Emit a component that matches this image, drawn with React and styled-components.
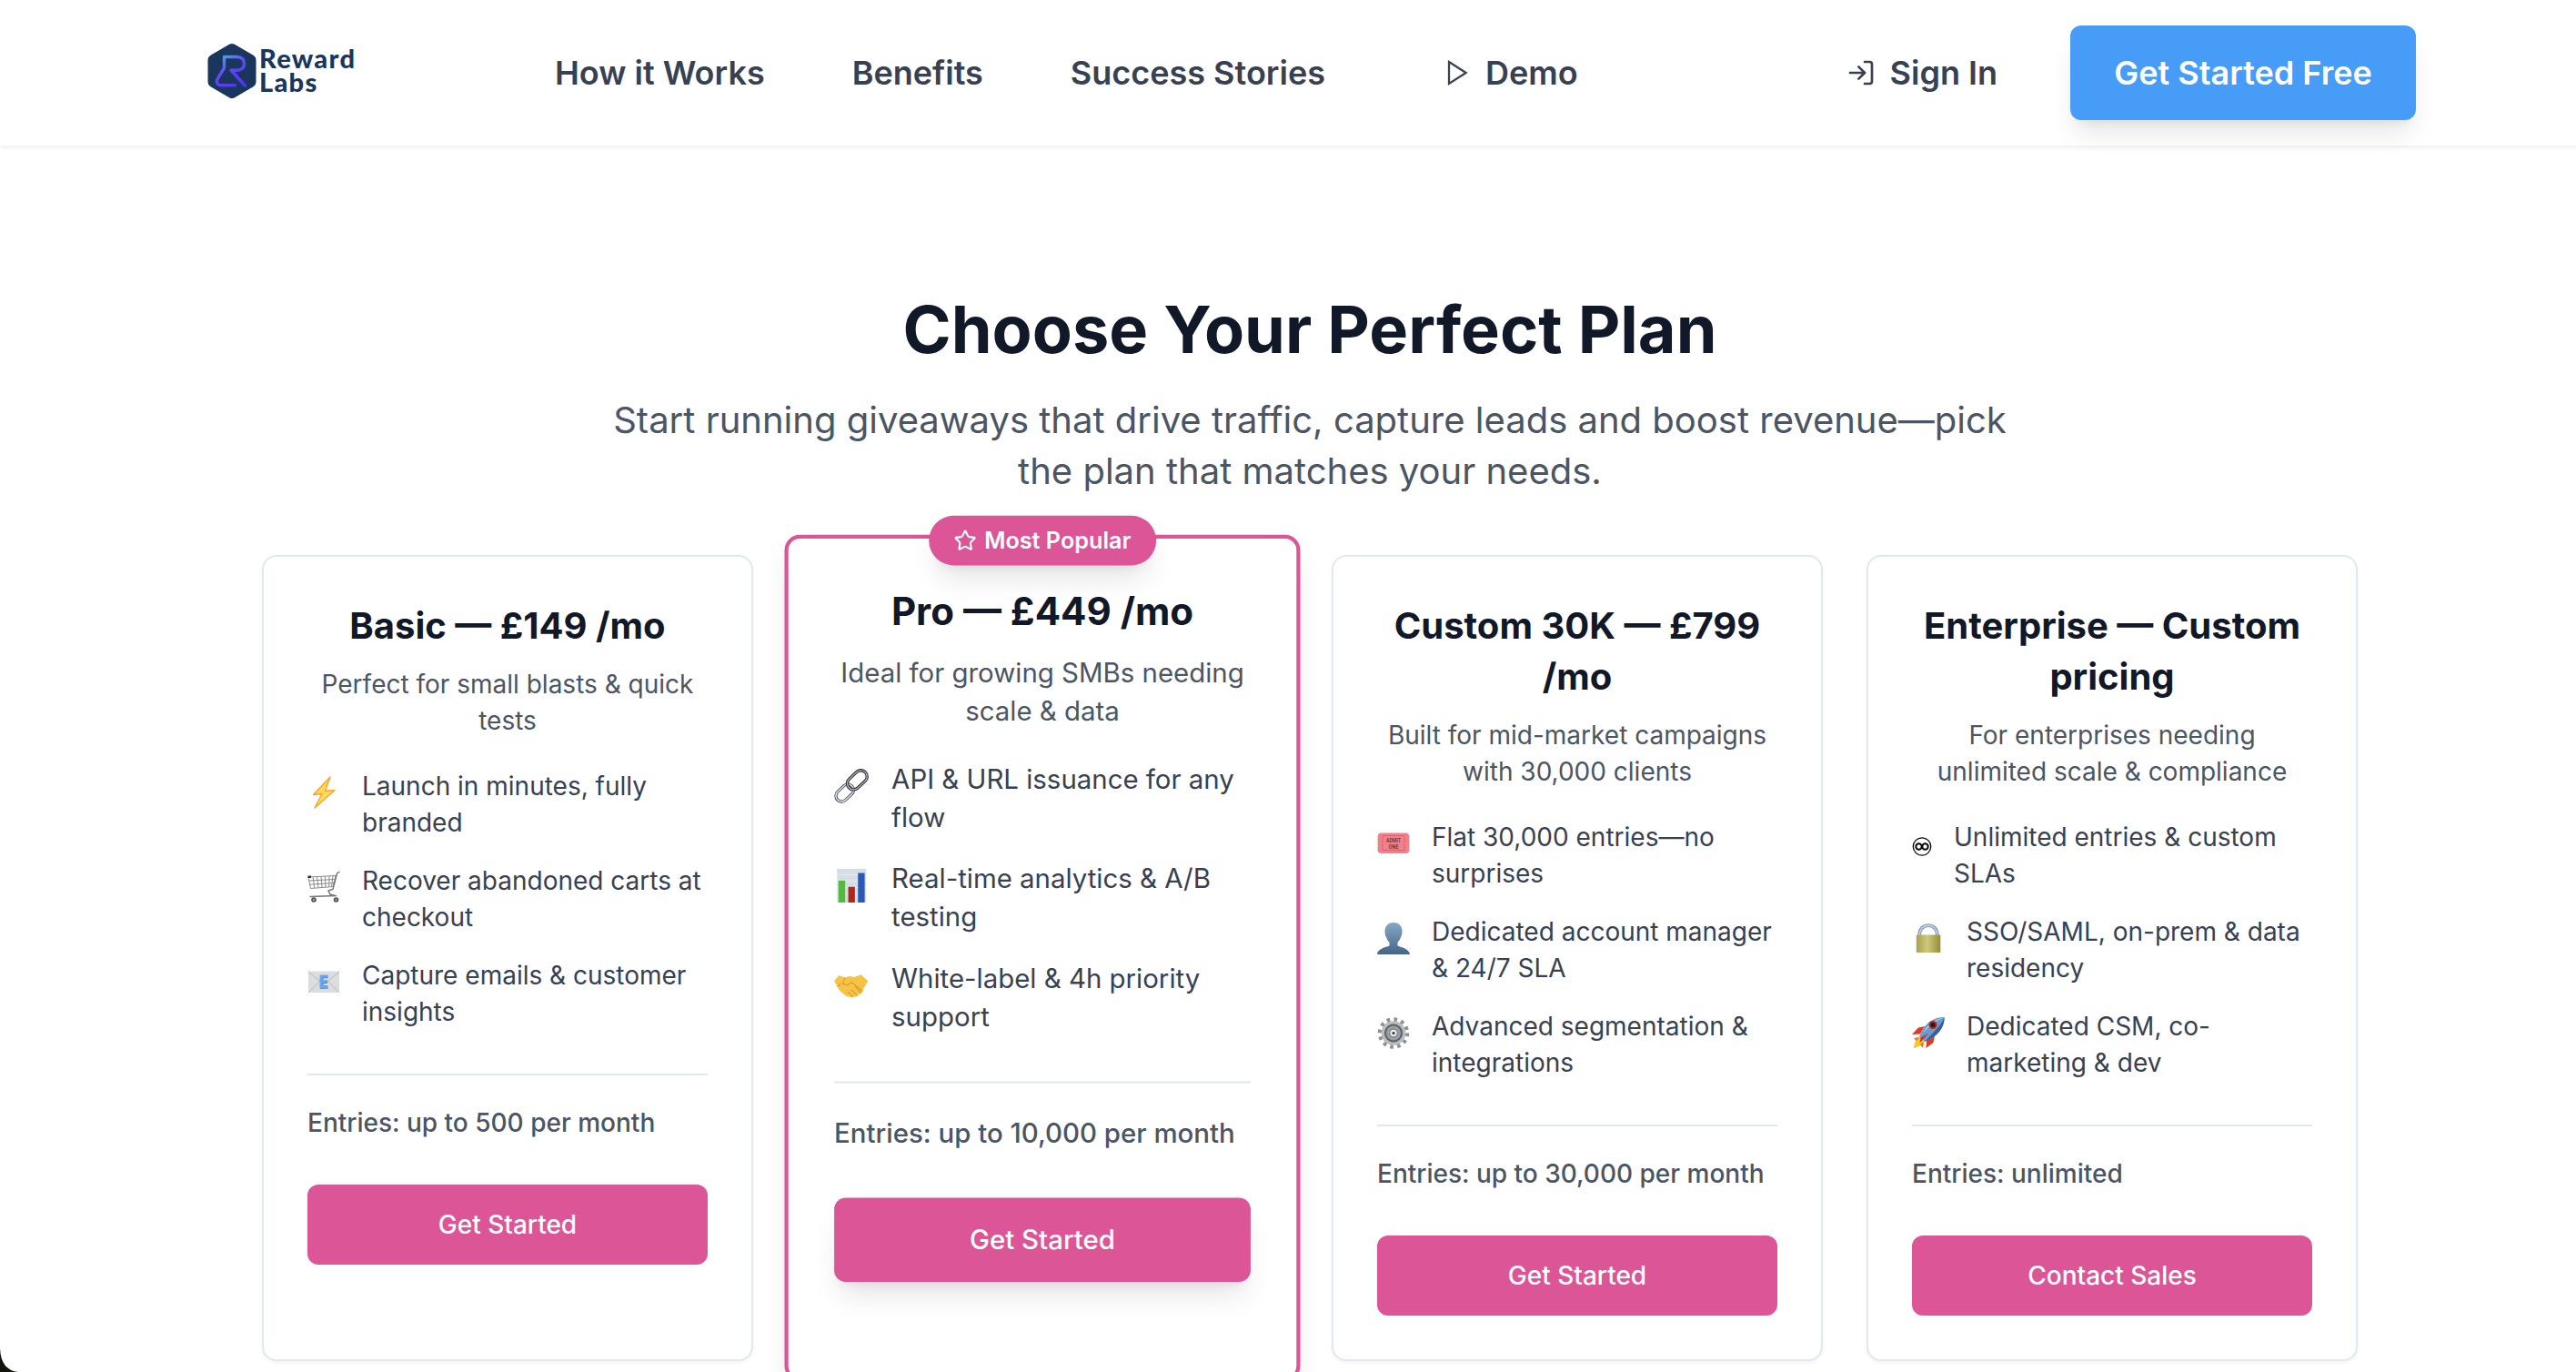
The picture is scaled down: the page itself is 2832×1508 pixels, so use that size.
import React from "react";
import styled, { createGlobalStyle, css } from "styled-components";
import { LogIn, Star } from "lucide-react";

const Global = createGlobalStyle`
  *, *::before, *::after { box-sizing: border-box; }
  html, body { margin: 0; padding: 0; background: #fff; overflow: hidden; }
  body { font-family: Inter, "Liberation Sans", sans-serif; font-optical-sizing: none; -webkit-font-smoothing: antialiased; }
  h1, h2, p, ul { margin: 0; padding: 0; font-weight: inherit; }
  button { font: inherit; border: 0; cursor: pointer; }
  svg { display: block; flex: none; }
`;

const Window = styled.div`
  position: relative;
  width: 2832px;
  height: 1508px;
  overflow: hidden;
  background: #fff;
`;

const Page = styled.div`
  width: 2880px;
`;

const Header = styled.header`
  display: flex;
  align-items: center;
  height: 160px;
  padding: 0 224px;
  background: #fff;
  box-shadow: 0 2px 4px rgba(0, 0, 0, 0.05), 0 1px 8px rgba(0, 0, 0, 0.03);
`;

const Brand = styled.a`
  display: flex;
  align-items: center;
  gap: 3px;
  width: 164px;
  margin: 0 218px 4px 4px;
`;

const BrandName = styled.span`
  display: flex;
  flex-direction: column;
  padding-bottom: 3px;
  font: 900 29px/26px Lato, sans-serif;
  letter-spacing: 1.3px;
  color: #1a365d;
`;

const Nav = styled.nav`
  display: flex;
  gap: 96px;
`;

const NavLink = styled.a`
  display: flex;
  align-items: center;
  gap: 16px;
  padding-left: ${(p) => (p.$inset ? "32px" : 0)};
  font-size: 36px;
  line-height: 56px;
  font-weight: 600;
  color: #374151;
`;

const Actions = styled.div`
  display: flex;
  align-items: center;
  gap: 80px;
  margin-left: auto;
`;

const PrimaryButton = styled.button`
  width: 380px;
  height: 104px;
  border-radius: 12px;
  background: #469cf7;
  color: #fff;
  font-size: 36px;
  font-weight: 600;
  box-shadow: 0 20px 30px -6px rgba(0, 0, 0, 0.1), 0 8px 12px -8px rgba(0, 0, 0, 0.1);
`;

const Section = styled.main`
  display: flex;
  flex-direction: column;
  align-items: center;
  padding: 162px 288px 0;
`;

const Heading = styled.h1`
  font-size: 72px;
  line-height: 80px;
  font-weight: 700;
  color: #111827;
`;

const Lead = styled.p`
  width: 1536px;
  margin-top: 32px;
  font-size: 40px;
  line-height: 56px;
  text-align: center;
  color: #4b5563;
`;

const Plans = styled.div`
  display: grid;
  grid-template-columns: repeat(4, 540px);
  gap: 48px;
  margin-top: 64px;
`;

const Card = styled.article`
  position: relative;
  display: flex;
  flex-direction: column;
  height: 886px;
  padding: 48px;
  border: 2px solid #e2e8f0;
  border-radius: 16px;
  background: #fff;
  box-shadow: 0 2px 4px rgba(0, 0, 0, 0.05);
  ${(p) =>
    p.$featured &&
    css`
      border: 4px solid #db5597;
      transform: scale(1.05);
      box-shadow: 0 20px 30px -6px rgba(0, 0, 0, 0.1), 0 8px 12px -8px rgba(0, 0, 0, 0.1);
    `}
`;

const Badge = styled.span`
  position: absolute;
  top: -24px;
  left: 50%;
  transform: translateX(-50%);
  display: flex;
  align-items: center;
  gap: 8px;
  height: 52px;
  padding: 0 26px 1px;
  border-radius: 26px;
  background: #db5597;
  color: #fff;
  font-size: 24px;
  line-height: 32px;
  font-weight: 600;
  white-space: nowrap;
  box-shadow: 0 20px 30px -6px rgba(0, 0, 0, 0.1), 0 8px 12px -8px rgba(0, 0, 0, 0.1);
`;

const PlanName = styled.h2`
  font-size: 40px;
  line-height: 56px;
  font-weight: 700;
  text-align: center;
  color: #111827;
`;

const PlanSummary = styled.p`
  margin-top: 16px;
  font-size: 28px;
  line-height: 40px;
  text-align: center;
  color: #4b5563;
`;

const Features = styled.ul`
  display: flex;
  flex-direction: column;
  gap: 24px;
  margin-top: 32px;
  list-style: none;
`;

const Feature = styled.li`
  display: flex;
  align-items: flex-start;
  gap: 24px;
  font-size: 28px;
  line-height: 40px;
  color: #374151;

  svg { margin-top: 9px; }
`;

const Quota = styled.p`
  margin-top: 48px;
  padding-top: 32px;
  border-top: 2px solid #e2e8f0;
  font-size: 28px;
  line-height: 40px;
  font-weight: 500;
  color: #4b5563;
`;

const PlanButton = styled.button`
  width: 100%;
  height: 88px;
  margin-top: 48px;
  border-radius: 12px;
  background: #db5597;
  color: #fff;
  font-size: 28px;
  font-weight: 500;
  box-shadow: ${(p) =>
    p.$raised ? "0 20px 30px -6px rgba(0,0,0,.1), 0 8px 12px -8px rgba(0,0,0,.1)" : "none"};
`;

const WindowCorner = styled.svg`
  position: absolute;
  left: 0;
  bottom: 0;
`;

const LogoMark = () => (
  <svg width="54" height="62" viewBox="0 0 54 62">
    <defs>
      <linearGradient id="flask" gradientUnits="userSpaceOnUse" x1="16" y1="14" x2="36" y2="46">
        <stop offset="0" stopColor="#45a5f5" />
        <stop offset="0.45" stopColor="#6548f5" />
        <stop offset="1" stopColor="#4f35f2" />
      </linearGradient>
    </defs>
    <path d="M24 1.8q3-1.800 6 0l20.500 12q3 1.800 3 5v24.400q0 3.200-3 5l-20.500 12q-3 1.800-6 0l-20.500-12q-3-1.800-3-5V18.800q0-3.200 3-5z" fill="#1a365d" />
    <path d="M30.500 46.800H14q-5-1.500-3-7l7.500-12V15.500H33q7.500.8 7.500 7.500T33 30.200H26L41.300 47" fill="none" stroke="url(#flask)" strokeWidth="3.400" strokeLinecap="round" strokeLinejoin="round" />
  </svg>
);

const PlayIcon = () => (
  <svg width="32" height="32" viewBox="0 0 24 24" fill="none" stroke="currentColor" strokeWidth="1.700" strokeLinejoin="miter">
    <polygon points="6 3 20 12 6 21 6 3" />
  </svg>
);

const Pic = ({ children, width = 36 }) => (
  <svg width={width} height="36" viewBox={`0 0 ${width} 36`}>{children}</svg>
);

const Bolt = () => (
  <Pic>
    <path d="M25 1 6.500 20.500l9.500-1L8 35 30 15.500l-10.500 1z" fill="#fdd95a" stroke="#f7a234" strokeWidth="1.400" strokeLinejoin="round" />
  </Pic>
);

const Cart = () => (
  <Pic>
    <g fill="none" stroke="#8b8b8b" strokeWidth="1">
      <path d="M1 7 3.500 19.500 28 17.500 31 5.500zM2 11l27.500-1.500M2.800 15.200 29 13.500M6 6.700l1.800 12.400M10.500 6.500 12 18.700M15 6.300l1 12.100M19.500 6.100 20 18M24 5.900 23.800 17.700M28 5.700 26.500 17.500" />
      <path d="M35.500 1 32.500 3 28 20.500l-5 1.500 2 4 5 1.500M2.500 28.500 32 27.500" stroke="#777" strokeWidth="1.500" />
    </g>
    <rect x="0.500" y="5.500" width="3.500" height="2.500" fill="#333" />
    <g fill="#555"><circle cx="7" cy="32" r="2.800" /><circle cx="31.500" cy="32" r="2.800" /></g>
    <g fill="#bbb"><circle cx="7" cy="32" r="1" /><circle cx="31.500" cy="32" r="1" /></g>
  </Pic>
);

const Mail = () => (
  <Pic>
    <rect x="1" y="6.500" width="34" height="23.500" rx="0.800" fill="#dcdddf" />
    <path d="M1 7 18 21 35 7M1 30l12-12M35 30 23 18" fill="none" stroke="#b4b6b9" strokeWidth="1" />
    <path d="M22.500 12.500h-7v11.500h7M15.500 18.200h6.500" fill="none" stroke="#4a7fc0" strokeWidth="3.600" />
    <path d="M22 12.200h-6.700v11.500H22M15.500 18h6" fill="none" stroke="#69a6f2" strokeWidth="2.600" />
  </Pic>
);

const Link = () => (
  <Pic>
    <g fill="none" transform="rotate(-43 18 18)">
      <rect x="-2.500" y="12.500" width="21" height="12" rx="6" stroke="#3c414a" strokeWidth="3" />
      <rect x="-2.500" y="12.500" width="21" height="12" rx="6" stroke="#dbe5f2" strokeWidth="1.400" />
      <rect x="15" y="11" width="23.500" height="13" rx="6.500" stroke="#2f2a32" strokeWidth="3.200" />
      <rect x="15" y="11" width="23.500" height="13" rx="6.500" stroke="#bcc7d8" strokeWidth="1.100" />
    </g>
  </Pic>
);

const Chart = () => (
  <Pic>
    <rect x="3" y="0.500" width="30.500" height="35.500" fill="#d6dde6" />
    <path d="M3 7h30M3 13.500h30M3 20h30M3 26.500h30" stroke="#e9edf2" strokeWidth="0.800" />
    <rect x="4.500" y="13" width="7" height="23" fill="#55b840" />
    <rect x="14.700" y="19.500" width="7" height="16.500" fill="#b32419" />
    <rect x="24.900" y="5" width="7" height="31" fill="#2759bd" />
  </Pic>
);

const Handshake = () => (
  <Pic>
    <g transform="translate(0 2.500)">
      <path d="M0 11.500 5 5.500l6 2.500 5-1.500 5 1 7-2.500 7.500 6.500-4 6.500-2 5-5.500 4.500-5 1.500-6-1.500-7-5.500-2.500-4.500z" fill="#f6c344" />
      <path d="m11 8.500-2 6 4.500 1.500 5-3 11 9M18 21l5.500 5M14.500 23l4.500 4.500M22 17.500l6 6.500M3.500 17.500l3-3" fill="none" stroke="#d39a2a" strokeWidth="1" strokeLinecap="round" />
    </g>
  </Pic>
);

const Ticket = () => (
  <Pic>
    <path d="M3 6.500h30l2.500 2.500v17.500L33 29H3L.5 26.500V9z" fill="#f0808a" />
    <path d="M.5 9v18M35.500 9v18" stroke="#fff" strokeWidth="1" strokeDasharray="1 2" />
    <path d="M6 9.500h24v16H6z" fill="none" stroke="#d8606c" strokeWidth="0.900" />
    <text x="18" y="17" fontSize="7.500" fontWeight="700" fontFamily="Roboto, sans-serif" textAnchor="middle" textLength="16" lengthAdjust="spacingAndGlyphs" fill="#7c3a42">ADMIT</text>
    <text x="18" y="23.500" fontSize="7.500" fontWeight="700" fontFamily="Roboto, sans-serif" textAnchor="middle" textLength="11" lengthAdjust="spacingAndGlyphs" fill="#7c3a42">ONE</text>
  </Pic>
);

const Person = () => (
  <Pic>
    <defs>
      <linearGradient id="bust" x1="0" y1="0" x2="0" y2="1">
        <stop offset="0" stopColor="#86a8c5" />
        <stop offset="1" stopColor="#466587" />
      </linearGradient>
    </defs>
    <path d="M18 1c6 0 9.500 4 9.500 9.500 0 3.500-.7 5.500-1.700 7-.8 2.500-2 4-3.300 5.300v3.400c2 2 12.500 2.300 13.500 9.800H0c1-7.500 11.500-7.800 13.500-9.800v-3.400c-1.300-1.300-2.500-2.800-3.300-5.300-1-1.500-1.700-3.500-1.700-7C8.500 5 12 1 18 1z" fill="url(#bust)" />
  </Pic>
);

const Gear = () => (
  <Pic>
    <circle cx="18" cy="18.500" r="15" fill="none" stroke="#8d9196" strokeWidth="4.500" strokeDasharray="3.600 4.254" />
    <circle cx="18" cy="18.500" r="11.800" fill="#a4a8ad" stroke="#b9bdc1" strokeWidth="3" />
    <circle cx="18" cy="18.500" r="9" fill="#9a9ea3" stroke="#5c6065" strokeWidth="2" />
    <circle cx="18" cy="18.500" r="4.300" fill="#eceeef" stroke="#7c8085" strokeWidth="1.200" />
    <circle cx="18" cy="18.500" r="1.600" fill="#33363a" />
  </Pic>
);

const Infinite = () => (
  <Pic width={22}>
    <g fill="none" stroke="#05070c">
      <circle cx="11" cy="21.500" r="9.700" strokeWidth="1.300" />
      <circle cx="7.500" cy="21.500" r="3.200" strokeWidth="2" />
      <circle cx="14.500" cy="21.500" r="3.200" strokeWidth="2" />
    </g>
  </Pic>
);

const Lock = () => (
  <Pic>
    <defs>
      <linearGradient id="brass" x1="0" x2="1">
        <stop offset="0" stopColor="#a7a052" />
        <stop offset="0.450" stopColor="#cfc97c" />
        <stop offset="1" stopColor="#948c40" />
      </linearGradient>
    </defs>
    <path d="M8.300 17V13.800a9.700 9.700 0 0 1 19.400 0V17" fill="none" stroke="#8195b0" strokeWidth="3.800" />
    <path d="M8.300 17V13.800a9.700 9.700 0 0 1 19.400 0V17" fill="none" stroke="#c2d4ea" strokeWidth="1.600" />
    <rect x="4.800" y="14.500" width="26.500" height="19.500" rx="1" fill="url(#brass)" />
  </Pic>
);

const Rocket = () => (
  <Pic>
    <path d="m14 11-7 1.500-7 7.500 9-.5zM25 22l-1.500 7-8 6 .5-9z" fill="#dc3c26" />
    <path d="m9 22-5 4-2.500 9.500L10 32l4.500-4.500z" fill="#fbc531" />
    <path d="m8 23-6 1 3 3zM13 28l-1 7-3-4z" fill="#ef6a25" />
    <path d="M35.500 1C27 .5 19 4.500 13 12.500L8 22l6 6 9.500-5C31.500 17 36 9.500 35.500 1z" fill="#6c9bd0" />
    <path d="M35.500 1C33 9 24 17 14 28l9.500-5C31.500 17 36 9.500 35.500 1z" fill="#355f96" />
    <path d="M34 2C26 3 18 9 12 18l9-9 8-5z" fill="#d4e5f5" />
    <circle cx="23" cy="9.500" r="4.500" fill="#b3271f" />
    <circle cx="23" cy="9.500" r="2.500" fill="#281a20" />
    <path d="m18.500 18.500-10 11 1-6z" fill="#c93323" />
  </Pic>
);

const plans = [
  {
    name: "Basic — £149 /mo",
    summary: "Perfect for small blasts & quick tests",
    features: [
      [Bolt, "Launch in minutes, fully branded"],
      [Cart, "Recover abandoned carts at checkout"],
      [Mail, "Capture emails & customer insights"],
    ],
    quota: "Entries: up to 500 per month",
    action: "Get Started",
  },
  {
    name: "Pro — £449 /mo",
    summary: "Ideal for growing SMBs needing scale & data",
    features: [
      [Link, "API & URL issuance for any flow"],
      [Chart, "Real-time analytics & A/B testing"],
      [Handshake, "White-label & 4h priority support"],
    ],
    quota: "Entries: up to 10,000 per month",
    action: "Get Started",
    featured: true,
  },
  {
    name: "Custom 30K — £799 /mo",
    summary: "Built for mid-market campaigns with 30,000 clients",
    features: [
      [Ticket, "Flat 30,000 entries—no surprises"],
      [Person, "Dedicated account manager & 24/7 SLA"],
      [Gear, "Advanced segmentation & integrations"],
    ],
    quota: "Entries: up to 30,000 per month",
    action: "Get Started",
  },
  {
    name: "Enterprise — Custom pricing",
    summary: "For enterprises needing unlimited scale & compliance",
    features: [
      [Infinite, "Unlimited entries & custom SLAs"],
      [Lock, "SSO/SAML, on-prem & data residency"],
      [Rocket, "Dedicated CSM, co-marketing & dev"],
    ],
    quota: "Entries: unlimited",
    action: "Contact Sales",
  },
];

export default function App() {
  return (
    <Window>
      <Global />
      <Page>
        <Header>
          <Brand>
            <LogoMark />
            <BrandName>
              <span>Reward</span>
              <span>Labs</span>
            </BrandName>
          </Brand>
          <Nav>
            <NavLink>How it Works</NavLink>
            <NavLink>Benefits</NavLink>
            <NavLink>Success Stories</NavLink>
            <NavLink $inset><PlayIcon />Demo</NavLink>
          </Nav>
          <Actions>
            <NavLink><LogIn size={32} />Sign In</NavLink>
            <PrimaryButton>Get Started Free</PrimaryButton>
          </Actions>
        </Header>
        <Section>
          <Heading>Choose Your Perfect Plan</Heading>
          <Lead>
            Start running giveaways that drive traffic, capture leads and boost
            revenue—pick the plan that matches your needs.
          </Lead>
          <Plans>
            {plans.map((plan) => (
              <Card key={plan.name} $featured={plan.featured}>
                {plan.featured && (
                  <Badge><Star size={24} />Most Popular</Badge>
                )}
                <PlanName>{plan.name}</PlanName>
                <PlanSummary>{plan.summary}</PlanSummary>
                <Features>
                  {plan.features.map(([Icon, label]) => (
                    <Feature key={label}><Icon /><span>{label}</span></Feature>
                  ))}
                </Features>
                <Quota>{plan.quota}</Quota>
                <PlanButton $raised={plan.featured}>{plan.action}</PlanButton>
              </Card>
            ))}
          </Plans>
        </Section>
      </Page>
      <WindowCorner width="20" height="26" viewBox="0 0 20 26">
        <path d="M0 0Q1 24 20 26H0z" fill="#12160a" />
      </WindowCorner>
    </Window>
  );
}
